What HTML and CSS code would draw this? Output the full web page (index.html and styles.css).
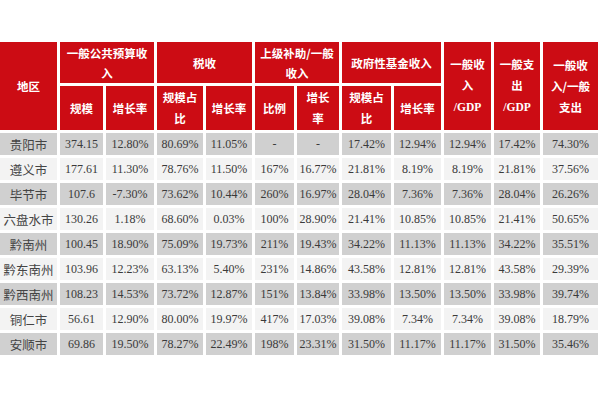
FILE: index.html
```html
<!DOCTYPE html>
<html lang="zh">
<head>
<meta charset="utf-8">
<link rel="stylesheet" href="styles.css">
</head>
<body>
<div class="page">
  <div class="grid">
    <div class="h area"><span>地区</span></div>
    <div class="h g1"><span>一般公共预算收<br>入</span></div>
    <div class="h g2"><span>税收</span></div>
    <div class="h g3"><span>上级补助/一般<br>收入</span></div>
    <div class="h g4"><span>政府性基金收入</span></div>
    <div class="h tall c10"><span>一般收<br>入<br><b class="lat">/GDP</b></span></div>
    <div class="h tall c11"><span>一般支<br>出<br><b class="lat">/GDP</b></span></div>
    <div class="h tall c12"><span>一般收<br>入/一般<br>支出</span></div>
    <div class="h sub"><span>规模</span></div>
    <div class="h sub"><span>增长率</span></div>
    <div class="h sub"><span>规模占<br>比</span></div>
    <div class="h sub"><span>增长率</span></div>
    <div class="h sub"><span>比例</span></div>
    <div class="h sub"><span>增长<br>率</span></div>
    <div class="h sub"><span>规模占<br>比</span></div>
    <div class="h sub"><span>增长率</span></div>

    <div class="row dark"><div class="n">贵阳市</div><div>374.15</div><div>12.80%</div><div>80.69%</div><div>11.05%</div><div>-</div><div>-</div><div>17.42%</div><div>12.94%</div><div>12.94%</div><div>17.42%</div><div>74.30%</div></div>
    <div class="row light"><div class="n">遵义市</div><div>177.61</div><div>11.30%</div><div>78.76%</div><div>11.50%</div><div>167%</div><div>16.77%</div><div>21.81%</div><div>8.19%</div><div>8.19%</div><div>21.81%</div><div>37.56%</div></div>
    <div class="row dark"><div class="n">毕节市</div><div>107.6</div><div>-7.30%</div><div>73.62%</div><div>10.44%</div><div>260%</div><div>16.97%</div><div>28.04%</div><div>7.36%</div><div>7.36%</div><div>28.04%</div><div>26.26%</div></div>
    <div class="row light"><div class="n">六盘水市</div><div>130.26</div><div>1.18%</div><div>68.60%</div><div>0.03%</div><div>100%</div><div>28.90%</div><div>21.41%</div><div>10.85%</div><div>10.85%</div><div>21.41%</div><div>50.65%</div></div>
    <div class="row dark"><div class="n">黔南州</div><div>100.45</div><div>18.90%</div><div>75.09%</div><div>19.73%</div><div>211%</div><div>19.43%</div><div>34.22%</div><div>11.13%</div><div>11.13%</div><div>34.22%</div><div>35.51%</div></div>
    <div class="row light"><div class="n">黔东南州</div><div>103.96</div><div>12.23%</div><div>63.13%</div><div>5.40%</div><div>231%</div><div>14.86%</div><div>43.58%</div><div>12.81%</div><div>12.81%</div><div>43.58%</div><div>29.39%</div></div>
    <div class="row dark"><div class="n">黔西南州</div><div>108.23</div><div>14.53%</div><div>73.72%</div><div>12.87%</div><div>151%</div><div>13.84%</div><div>33.98%</div><div>13.50%</div><div>13.50%</div><div>33.98%</div><div>39.74%</div></div>
    <div class="row light"><div class="n">铜仁市</div><div>56.61</div><div>12.90%</div><div>80.00%</div><div>19.97%</div><div>417%</div><div>17.03%</div><div>39.08%</div><div>7.34%</div><div>7.34%</div><div>39.08%</div><div>18.79%</div></div>
    <div class="row dark"><div class="n">安顺市</div><div>69.86</div><div>19.50%</div><div>78.27%</div><div>22.49%</div><div>198%</div><div>23.31%</div><div>31.50%</div><div>11.17%</div><div>11.17%</div><div>31.50%</div><div>35.46%</div></div>
  </div>
</div>
</body>
</html>
```

FILE: styles.css
```css
html, body {
  margin: 0;
  padding: 0;
  background: #ffffff;
}

.page {
  width: 600px;
  height: 400px;
  padding-top: 42px;
  box-sizing: border-box;
}

.grid {
  width: 598px;
  display: grid;
  grid-template-columns: 57px 43px 48px 46px 46px 39px 42px 49px 47px 47px 46px 55px;
  grid-template-rows: 41px 44px repeat(9, 22px);
  gap: 3px;
}

.h {
  background: #cc0c14;
  color: #ffffff;
  font-family: "Noto Sans CJK SC", "Liberation Serif", sans-serif;
  font-weight: 700;
  font-size: 11.5px;
  line-height: 20px;
  display: flex;
  align-items: center;
  justify-content: center;
  text-align: center;
}

.h > span {
  display: block;
}

.lat {
  font-family: "Liberation Serif", serif;
  font-weight: 700;
}

.area { grid-column: 1; grid-row: 1 / 3; }
.g1 { grid-column: 2 / 4; grid-row: 1; }
.g2 { grid-column: 4 / 6; grid-row: 1; }
.g3 { grid-column: 6 / 8; grid-row: 1; }
.g4 { grid-column: 8 / 10; grid-row: 1; }
.tall { grid-row: 1 / 3; line-height: 21px; }
.c10 { grid-column: 10; }
.c11 { grid-column: 11; }
.c12 { grid-column: 12; }
.sub { grid-row: 2; line-height: 21px; }

.row {
  display: contents;
}

.row > div {
  display: flex;
  align-items: center;
  justify-content: center;
  font-family: "Liberation Serif", serif;
  font-size: 12px;
  color: #3a3a3a;
}

.row > .n {
  font-family: "Noto Sans CJK SC", sans-serif;
  font-size: 12.5px;
  color: #444444;
}

.row.dark > div {
  background: #d0d0d0;
}

.row.light > div {
  background: #f3f3f3;
}
```
